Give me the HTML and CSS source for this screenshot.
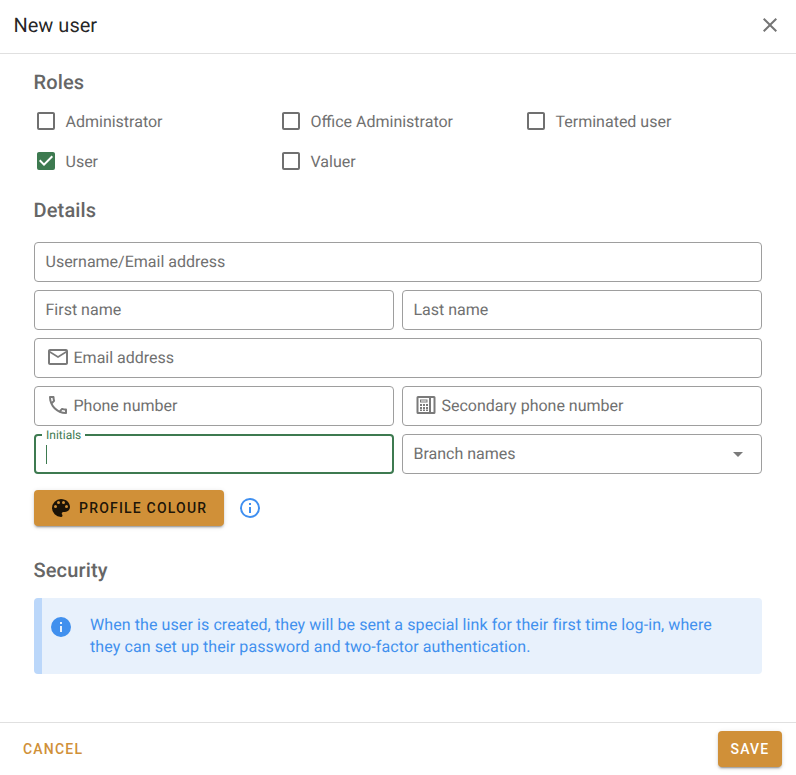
FILE: index.html
```html
<!DOCTYPE html>
<html lang="en">
<head>
<meta charset="UTF-8">
<title>New user</title>
<link rel="stylesheet" href="styles.css">
</head>
<body>

<div class="dialog">

  <header class="dialog-title">
    <span>New user</span>
    <svg class="close" viewBox="0 0 24 24"><path d="M19,6.41L17.59,5L12,10.59L6.41,5L5,6.41L10.59,12L5,17.59L6.41,19L12,13.41L17.59,19L19,17.59L13.41,12L19,6.41Z"/></svg>
  </header>

  <main class="dialog-body">

    <h2>Roles</h2>
    <div class="roles">
      <label class="role"><svg viewBox="0 0 24 24"><path d="M19,3H5C3.89,3 3,3.89 3,5V19A2,2 0 0,0 5,21H19A2,2 0 0,0 21,19V5C21,3.89 20.1,3 19,3M19,5V19H5V5H19Z"/></svg>Administrator</label>
      <label class="role"><svg viewBox="0 0 24 24"><path d="M19,3H5C3.89,3 3,3.89 3,5V19A2,2 0 0,0 5,21H19A2,2 0 0,0 21,19V5C21,3.89 20.1,3 19,3M19,5V19H5V5H19Z"/></svg>Office Administrator</label>
      <label class="role"><svg viewBox="0 0 24 24"><path d="M19,3H5C3.89,3 3,3.89 3,5V19A2,2 0 0,0 5,21H19A2,2 0 0,0 21,19V5C21,3.89 20.1,3 19,3M19,5V19H5V5H19Z"/></svg>Terminated user</label>
      <label class="role checked"><svg viewBox="0 0 24 24"><path d="M10,17L5,12L6.41,10.58L10,14.17L17.59,6.58L19,8M19,3H5C3.89,3 3,3.89 3,5V19A2,2 0 0,0 5,21H19A2,2 0 0,0 21,19V5C21,3.89 20.1,3 19,3Z"/></svg>User</label>
      <label class="role"><svg viewBox="0 0 24 24"><path d="M19,3H5C3.89,3 3,3.89 3,5V19A2,2 0 0,0 5,21H19A2,2 0 0,0 21,19V5C21,3.89 20.1,3 19,3M19,5V19H5V5H19Z"/></svg>Valuer</label>
    </div>

    <h2 class="details-title">Details</h2>
    <div class="fields">
      <div class="field wide">Username/Email address</div>
      <div class="field">First name</div>
      <div class="field">Last name</div>
      <div class="field wide">
        <svg viewBox="0 0 24 24"><path d="M22 6C22 4.9 21.1 4 20 4H4C2.9 4 2 4.9 2 6V18C2 19.1 2.9 20 4 20H20C21.1 20 22 19.1 22 18V6M20 6L12 11L4 6H20M20 18H4V8L12 13L20 8V18Z"/></svg>
        Email address
      </div>
      <div class="field">
        <svg viewBox="0 0 24 24"><path d="M20,15.5C18.8,15.5 17.5,15.3 16.4,14.9C16.3,14.9 16.2,14.9 16.1,14.9C15.8,14.9 15.6,15 15.4,15.2L13.2,17.4C10.4,15.9 8,13.6 6.6,10.8L8.8,8.6C9.1,8.3 9.2,7.9 9,7.6C8.7,6.5 8.5,5.2 8.5,4C8.5,3.5 8,3 7.5,3H4C3.5,3 3,3.5 3,4C3,13.4 10.6,21 20,21C20.5,21 21,20.5 21,20V16.5C21,16 20.5,15.5 20,15.5M5,5H6.5C6.6,5.9 6.8,6.8 7,7.6L5.8,8.8C5.4,7.6 5.1,6.3 5,5M19,19C17.7,18.9 16.4,18.6 15.2,18.2L16.4,17C17.2,17.2 18.1,17.4 19,17.4V19Z"/></svg>
        Phone number
      </div>
      <div class="field">
        <svg viewBox="0 0 24 24"><path fill-rule="evenodd" d="M4,3H20A1.5,1.5 0 0,1 21.5,4.5V19.5A1.5,1.5 0 0,1 20,21H4A1.5,1.5 0 0,1 2.5,19.5V4.5A1.5,1.5 0 0,1 4,3M4.5,5V19H15V5H4.5M17,5V19H19.5V5H17M6,6.5H13.5V9.5H6V6.5M7,7.5V8.5H12.5V7.5H7M6,11H8V13H6V11M9,11H11V13H9V11M12,11H14V13H12V11M6,14H8V16H6V14M9,14H11V16H9V14M12,14H14V16H12V14M6,16.5H8V18H6V16.5M9,16.5H11V18H9V16.5M12,16.5H14V18H12V16.5Z"/></svg>
        Secondary phone number
      </div>
      <div class="field focused">
        <span class="float-label">Initials</span>
        <span class="caret"></span>
      </div>
      <div class="field select">
        Branch names
        <svg viewBox="0 0 24 24"><path d="M7,10L12,15L17,10H7Z"/></svg>
      </div>
    </div>

    <div class="colour-row">
      <button class="btn-colour">
        <svg viewBox="0 0 24 24"><path d="M17.5,12A1.5,1.5 0 0,1 16,10.5A1.5,1.5 0 0,1 17.5,9A1.5,1.5 0 0,1 19,10.5A1.5,1.5 0 0,1 17.5,12M14.5,8A1.5,1.5 0 0,1 13,6.5A1.5,1.5 0 0,1 14.5,5A1.5,1.5 0 0,1 16,6.5A1.5,1.5 0 0,1 14.5,8M9.5,8A1.5,1.5 0 0,1 8,6.5A1.5,1.5 0 0,1 9.5,5A1.5,1.5 0 0,1 11,6.5A1.5,1.5 0 0,1 9.5,8M6.5,12A1.5,1.5 0 0,1 5,10.5A1.5,1.5 0 0,1 6.5,9A1.5,1.5 0 0,1 8,10.5A1.5,1.5 0 0,1 6.5,12M12,3A9,9 0 0,0 3,12A9,9 0 0,0 12,21A1.5,1.5 0 0,0 13.5,19.5C13.5,19.11 13.35,18.76 13.11,18.5C12.88,18.23 12.73,17.88 12.73,17.5A1.5,1.5 0 0,1 14.23,16H16A5,5 0 0,0 21,11C21,6.58 16.97,3 12,3Z"/></svg>
        Profile colour
      </button>
      <svg class="info-outline" viewBox="0 0 24 24"><path d="M11,9H13V7H11M12,20C7.59,20 4,16.41 4,12C4,7.59 7.59,4 12,4C16.41,4 20,7.59 20,12C20,16.41 16.41,20 12,20M12,2A10,10 0 0,0 2,12A10,10 0 0,0 12,22A10,10 0 0,0 22,12A10,10 0 0,0 12,2M11,17H13V11H11V17Z"/></svg>
    </div>

    <h2 class="security-title">Security</h2>
    <div class="alert">
      <svg viewBox="0 0 24 24"><path d="M13,9H11V7H13M13,17H11V11H13M12,2A10,10 0 0,0 2,12A10,10 0 0,0 12,22A10,10 0 0,0 22,12A10,10 0 0,0 12,2Z"/></svg>
      <p>When the user is created, they will be sent a special link for their first time log-in, where they can set up their password and two-factor authentication.</p>
    </div>

  </main>

  <footer class="dialog-actions">
    <button class="btn-cancel">Cancel</button>
    <button class="btn-save">Save</button>
  </footer>

</div>

</body>
</html>
```

FILE: styles.css
```css
* {
  box-sizing: border-box;
}

body {
  margin: 0;
  background-color: #fff;
  font-family: Roboto, sans-serif;
  color: rgba(0, 0, 0, 0.6);
  text-rendering: geometricPrecision;
}

.dialog {
  display: flex;
  flex-direction: column;
  height: 775px;
  overflow: hidden;
}

.dialog-title {
  display: flex;
  align-items: center;
  justify-content: space-between;
  height: 54px;
  padding: 0 14.5px 4px 13.5px;
  border-bottom: 1px solid #e0e0e0;
  font-size: 20px;
  color: rgba(0, 0, 0, 0.87);
}

.close {
  width: 24px;
  height: 24px;
  fill: #757575;
}

.dialog-body {
  flex: 1;
  padding: 12px 34px 0 34px;
}

h2 {
  margin: 0 0 0 -0.5px;
  font-size: 20px;
  font-weight: 500;
  line-height: 32px;
  letter-spacing: 0.15px;
  color: #666;
}

.roles {
  display: grid;
  grid-template-columns: repeat(3, 245px);
  grid-auto-rows: 40px;
  margin-top: 3px;
}

.role {
  display: flex;
  align-items: center;
  gap: 8px;
  margin-left: -0.5px;
  font-size: 16px;
  color: #707070;
}

.role svg {
  width: 24px;
  height: 24px;
  fill: #707070;
}

.role.checked svg {
  fill: #3d7a50;
}

.details-title {
  margin-top: 13px;
}

.fields {
  display: grid;
  grid-template-columns: 1fr 1fr;
  gap: 8px;
  margin-top: 16px;
}

.field {
  position: relative;
  display: flex;
  align-items: center;
  gap: 4px;
  height: 40px;
  padding: 0 11px 2px 10.5px;
  border: 1px solid #9e9e9e;
  border-radius: 4px;
  font-size: 16px;
  color: #707070;
}

.field svg {
  width: 24px;
  height: 24px;
  fill: #7a7a7a;
  flex-shrink: 0;
}

.wide {
  grid-column: span 2;
}

.focused {
  border: 2px solid #3d7a50;
  padding: 0 10px;
}

.float-label {
  position: absolute;
  top: -8px;
  left: 6px;
  padding: 0 4px;
  background-color: #fff;
  font-size: 12px;
  line-height: 14px;
  color: #3d7a50;
}

.caret {
  width: 1px;
  height: 19px;
  margin-top: 1px;
  background-color: #3d7a50;
}

.select {
  justify-content: space-between;
}

.select svg {
  margin-top: 2px;
}

.colour-row {
  display: flex;
  align-items: center;
  gap: 14px;
  margin-top: 16px;
}

button {
  border: none;
  font-family: Roboto, sans-serif;
  font-size: 14px;
  font-weight: 500;
  letter-spacing: 1.2px;
  text-transform: uppercase;
}

.btn-colour {
  display: flex;
  align-items: center;
  gap: 6px;
  width: 190px;
  height: 36px;
  padding: 0 15px;
  background-color: #d09038;
  border-radius: 4px;
  box-shadow: 0 3px 1px -2px rgba(0,0,0,.2), 0 2px 2px 0 rgba(0,0,0,.14), 0 1px 5px 0 rgba(0,0,0,.12);
  color: rgba(0, 0, 0, 0.87);
}

.btn-colour svg {
  width: 24px;
  height: 24px;
  fill: rgba(0, 0, 0, 0.87);
}

.info-outline {
  width: 24px;
  height: 24px;
  fill: #3f8ff0;
}

.security-title {
  margin-top: 28px;
}

.alert {
  display: flex;
  align-items: flex-start;
  gap: 17px;
  height: 76px;
  margin-top: 12px;
  padding: 16px 40px 0 7px;
  background-color: #e8f1fc;
  border-left: 8px solid #bbd7fa;
  border-radius: 4px;
  color: #4190ee;
}

.alert svg {
  width: 24px;
  height: 24px;
  margin-top: 1px;
  fill: #4190ee;
  flex-shrink: 0;
}

.alert p {
  margin: 0;
  font-size: 16px;
  line-height: 22px;
  letter-spacing: 0.09px;
}

.dialog-actions {
  display: flex;
  align-items: center;
  justify-content: space-between;
  height: 53px;
  padding: 0 14px 0 23px;
  border-top: 1px solid #e0e0e0;
}

.btn-cancel {
  padding: 0;
  background: none;
  color: #d09038;
}

.btn-save {
  height: 36px;
  width: 64px;
  padding: 0;
  background-color: #d09038;
  border-radius: 4px;
  box-shadow: 0 3px 1px -2px rgba(0,0,0,.2), 0 2px 2px 0 rgba(0,0,0,.14), 0 1px 5px 0 rgba(0,0,0,.12);
  color: #fff;
}
```
